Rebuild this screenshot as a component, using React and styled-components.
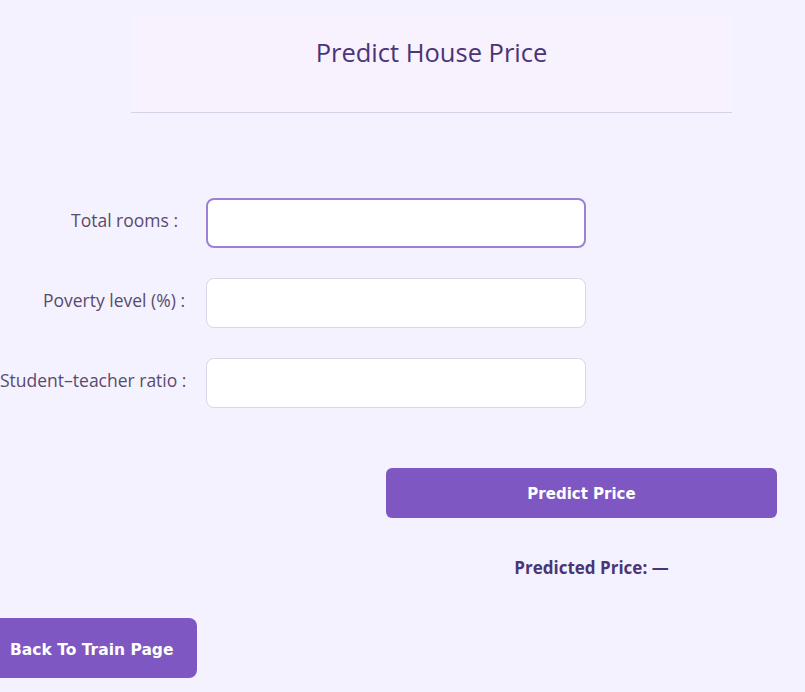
import React, { useState } from 'react';
import styled, { createGlobalStyle } from 'styled-components';

const GlobalStyle = createGlobalStyle`
  body {
    margin: 0;
    background: #f4f2fe;
    font-family: "Open Sans", "Noto Sans", sans-serif;
  }
`;

const Page = styled.div`
  display: flex;
  flex-direction: column;
  padding-top: 14px;
  padding-bottom: 14px;
  overflow: hidden;
`;

const Header = styled.header`
  margin-left: 131px;
  width: 601px;
  height: 98px;
  display: flex;
  align-items: center;
  justify-content: center;
  background: #f8f1fe;
  border-bottom: 1px solid #dad1e8;
`;

const Title = styled.h1`
  margin: 0;
  font-size: 25.5px;
  font-weight: 500;
  color: #4a3578;
  padding-bottom: 22px;
`;

const Form = styled.form`
  display: grid;
  grid-template-columns: 185px 380px;
  column-gap: 21px;
  row-gap: 30px;
  margin-top: 85px;
`;

const Label = styled.label`
  text-align: right;
  align-self: center;
  font-size: 17.5px;
  font-weight: 500;
  color: #5a4a6e;
  white-space: nowrap;
  padding-right: ${p => p.$inset || 0}px;
  padding-bottom: 7px;
`;

const Input = styled.input`
  box-sizing: border-box;
  height: 50px;
  width: 380px;
  border-radius: 8px;
  border: 1px solid #dcd4ea;
  background: #fff;
  padding: 0 14px;
  font-size: 16px;
  outline: none;
  &:focus {
    border: 2px solid #9b80d6;
  }
`;

const PredictButton = styled.button`
  margin-left: 386px;
  margin-top: 60px;
  width: 391px;
  height: 50px;
  border: none;
  border-radius: 6px;
  background: #7e57c2;
  color: #fff;
  font-family: "DejaVu Sans", sans-serif;
  font-weight: bold;
  font-size: 15px;
  padding-top: 2px;
  cursor: pointer;
`;

const Result = styled.p`
  margin: 38px 0 0 396px;
  width: 391px;
  text-align: center;
  font-size: 17px;
  font-weight: 700;
  color: #4a3578;
`;

const BackButton = styled.button`
  align-self: flex-start;
  margin-left: -14px;
  margin-top: 39px;
  height: 60px;
  padding: 3px 24px 0;
  border: none;
  border-radius: 8px;
  background: #7e57c2;
  color: #fff;
  font-family: "DejaVu Sans", sans-serif;
  font-weight: bold;
  font-size: 15.5px;
  cursor: pointer;
`;

const fields = [
  { id: 'rooms', label: 'Total rooms :', inset: 7 },
  { id: 'poverty', label: 'Poverty level (%) :' },
  { id: 'ratio', label: 'Student–teacher ratio :' },
];

export default function App() {
  const [values, setValues] = useState({ rooms: '', poverty: '', ratio: '' });

  return (
    <>
      <GlobalStyle />
      <Page>
        <Header>
          <Title>Predict House Price</Title>
        </Header>
        <Form onSubmit={e => e.preventDefault()}>
          {fields.map((f, i) => (
            <React.Fragment key={f.id}>
              <Label htmlFor={f.id} $inset={f.inset}>{f.label}</Label>
              <Input
                id={f.id}
                autoFocus={i === 0}
                value={values[f.id]}
                onChange={e => setValues({ ...values, [f.id]: e.target.value })}
              />
            </React.Fragment>
          ))}
        </Form>
        <PredictButton type="button">Predict Price</PredictButton>
        <Result>Predicted Price: —</Result>
        <BackButton type="button">Back To Train Page</BackButton>
      </Page>
    </>
  );
}
